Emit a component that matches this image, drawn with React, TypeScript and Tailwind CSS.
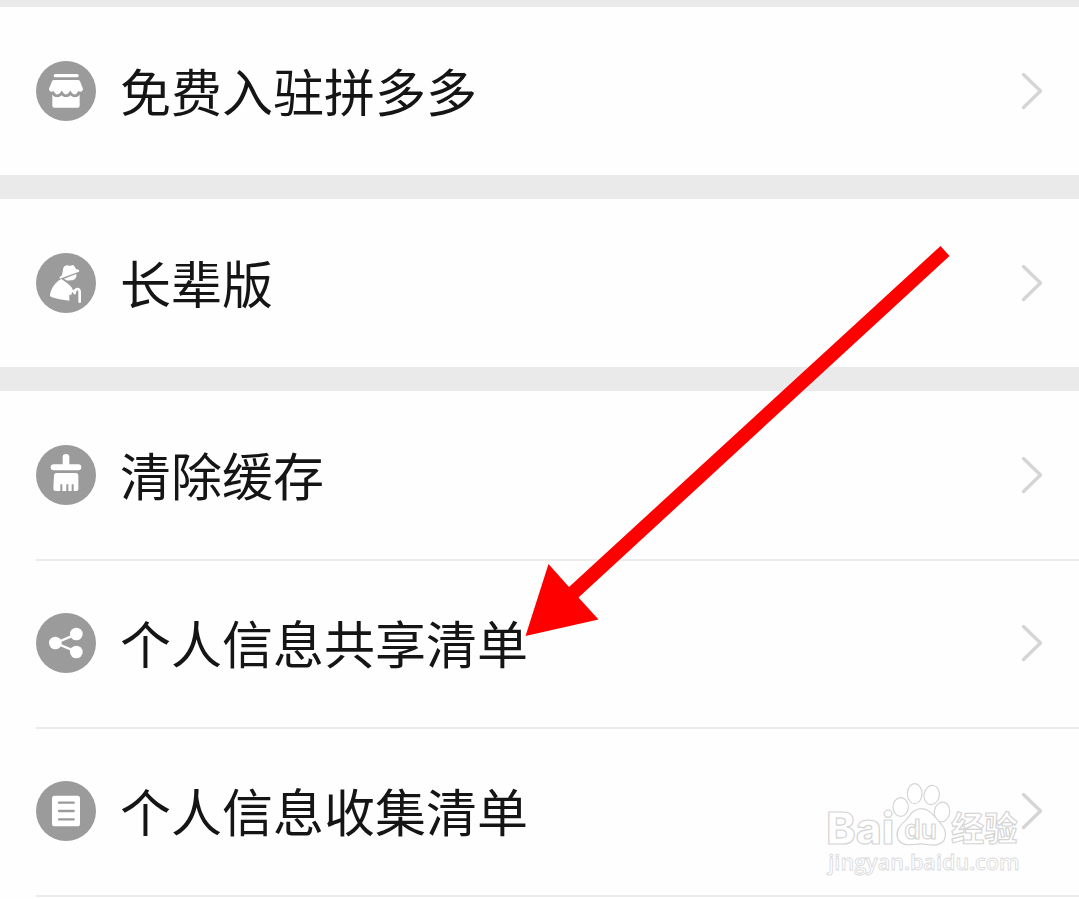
import React from 'react';

const ShopIcon = () => (
  <svg viewBox="30 33 180 180" className="w-[60px] h-[60px] shrink-0">
    <circle cx="120" cy="123" r="90" fill="#9b9b9b" />
    <rect x="83" y="72" width="75" height="10" rx="5" fill="#fff" />
    <path d="M79 133H161V167Q161 173 155 173H85Q79 173 79 167Z" fill="#fff" />
    <path
      d="M84 90H156Q160 90 162 94L171 116C171 124 163 128 157 123C153 135 140 138 133 126C128 137 112 137 107 126C100 138 87 135 83 123C77 128 69 124 69 116L78 94Q80 90 84 90Z"
      fill="#fff"
    />
    <path d="M79 127C86 141 100 140 107 129C113 140 127 140 133 129C140 140 154 141 161 127" fill="none" stroke="#9b9b9b" strokeWidth="8" />
  </svg>
);

const ElderIcon = () => (
  <svg viewBox="30 30 180 180" className="w-[60px] h-[60px] shrink-0">
    <circle cx="120" cy="120" r="90" fill="#9b9b9b" />
    <path
      d="M102 101C99 104 101 108 105 106L157 87C161 85 161 81 157 80L150 78L144 68Q142 65 138 67L131 69Q127 66 122 67L117 69Q113 71 112 75L108 97Z"
      fill="#fff"
    />
    <path d="M114 107L151 93C153 103 146 112 136 112C127 113 119 112 114 107Z" fill="#fff" />
    <path
      d="M106 108C88 117 77 134 72 154Q70 160 76 162C92 168 108 171 130 173L130 155L139 136C130 124 117 115 106 108Z"
      fill="#fff"
    />
    <path d="M133 152C134 141 141 140 146 150C147 135 161 134 161 147V176" fill="none" stroke="#fff" strokeWidth="8" strokeLinecap="round" strokeLinejoin="round" />
  </svg>
);

const BrushIcon = () => (
  <svg viewBox="30 30 180 180" className="w-[60px] h-[60px] shrink-0">
    <circle cx="120" cy="120" r="90" fill="#9b9b9b" />
    <path
      d="M110 88V67Q110 57 120 57Q130 57 130 67V88H157Q166 88 166 97Q166 106 157 106H83Q74 106 74 97Q74 88 83 88Z"
      fill="#fff"
    />
    <path
      d="M91 114H149Q157 114 157 122V162Q157 168 151 168H143V148H137V168H127V148H121V168H109V148H103V168H89Q82 168 82 161L84 122Q84 114 91 114Z"
      fill="#fff"
    />
  </svg>
);

const ShareIcon = () => (
  <svg viewBox="30 30 180 180" className="w-[60px] h-[60px] shrink-0">
    <circle cx="120" cy="120" r="90" fill="#9b9b9b" />
    <path d="M150 94L89 120L150 146" fill="none" stroke="#fff" strokeWidth="7" />
    <circle cx="88" cy="120" r="19" fill="#fff" />
    <circle cx="151" cy="93" r="19" fill="#fff" />
    <circle cx="151" cy="147" r="19" fill="#fff" />
  </svg>
);

const ListIcon = () => (
  <svg viewBox="30 30 180 180" className="w-[60px] h-[60px] shrink-0">
    <circle cx="120" cy="120" r="90" fill="#9b9b9b" />
    <rect x="78" y="74" width="84" height="92" rx="8" fill="#fff" />
    <path d="M99 95H143M99 120H143M99 145H143" stroke="#9b9b9b" strokeWidth="7" strokeLinecap="round" />
  </svg>
);

const Chevron = () => (
  <svg viewBox="0 0 22 38" className="w-[22px] h-[38px] ml-auto mr-9 shrink-0">
    <path d="M2.5 2.5L19.5 19L2.5 35.5" fill="none" stroke="#d5d5d5" strokeWidth="3.4" strokeLinecap="round" strokeLinejoin="round" />
  </svg>
);

type RowProps = {
  icon: React.ReactNode;
  label: string;
  divided?: boolean;
};

const Row = ({ icon, label, divided }: RowProps) => (
  <div className="h-[168px] pl-9">
    <div className={divided ? 'flex items-center h-full border-t-2 border-[#ebebeb] pb-0.5' : 'flex items-center h-full'}>
      {icon}
      <span className="ml-6 -mt-0.5 text-[51px] leading-none text-[#151515] whitespace-nowrap">{label}</span>
      <Chevron />
    </div>
  </div>
);

const Watermark = () => (
  <svg
    viewBox="0 0 807 387"
    className="absolute left-[810px] top-[770px] w-[269px] h-[129px]"
    fill="#fff"
    stroke="#d4d4d4"
    strokeWidth="3.5"
    strokeLinejoin="round"
  >
    <text x="49" y="221" fontSize="133" textLength="204" lengthAdjust="spacingAndGlyphs" fontFamily="Inter, sans-serif" fontWeight="800">Bai</text>
    <ellipse cx="272" cy="111" rx="23" ry="28" />
    <ellipse cx="314" cy="71" rx="22" ry="30" />
    <ellipse cx="365" cy="75" rx="23" ry="29" transform="rotate(10 365 75)" />
    <ellipse cx="396" cy="126" rx="23" ry="30" transform="rotate(10 396 126)" />
    <path d="M334 116C308 116 301 137 287 151C270 166 258 180 262 201C268 226 292 226 315 223Q334 220 353 224C380 228 402 224 406 199C409 179 397 165 384 151C370 136 359 116 334 116Z" />
    <text x="283" y="207" fontSize="82" textLength="98" lengthAdjust="spacingAndGlyphs" fontFamily="Inter, sans-serif" fontWeight="600">du</text>
    <text x="423" y="213" fontSize="102" textLength="200" lengthAdjust="spacingAndGlyphs" fontFamily="'Noto Sans CJK SC', sans-serif" fontWeight="700">经验</text>
    <text x="55" y="299" fontSize="64" textLength="574" lengthAdjust="spacingAndGlyphs" fontFamily="'Open Sans', 'Noto Sans', sans-serif" fontWeight="600" stroke="#dadada" strokeWidth="2.5">jingyan.baidu.com</text>
  </svg>
);

const Arrow = () => (
  <svg viewBox="0 0 430 400" className="absolute left-[523px] top-[242px] w-[430px] h-[400px]">
    <path d="M2.5 394L25.5 322L46 345L417.5 4L426.5 14L55.5 355.5L75.5 377.5Z" fill="#ff0000" />
  </svg>
);

const App = () => {
  return (
    <div className="relative w-full h-[899px] overflow-hidden bg-[#fefefe] font-['Noto_Sans_CJK_SC',sans-serif]">
      <div className="h-[7px] bg-[#eaeaea]"></div>
      <Row icon={<ShopIcon />} label="免费入驻拼多多" />
      <div className="h-6 bg-[#eaeaea]"></div>
      <Row icon={<ElderIcon />} label="长辈版" />
      <div className="h-6 bg-[#eaeaea]"></div>
      <Row icon={<BrushIcon />} label="清除缓存" />
      <Row icon={<ShareIcon />} label="个人信息共享清单" divided />
      <Row icon={<ListIcon />} label="个人信息收集清单" divided />
      <div className="ml-9 h-0.5 bg-[#ebebeb]"></div>

      <Watermark />
      <Arrow />
    </div>
  );
};

export default App;
